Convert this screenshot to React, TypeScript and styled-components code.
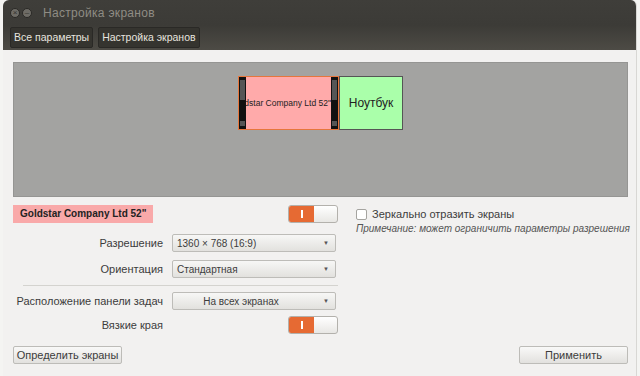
import React from "react";
import styled, { createGlobalStyle } from "styled-components";

const Global = createGlobalStyle`
  html, body {
    margin: 0;
    padding: 0;
    width: 640px;
    height: 376px;
    overflow: hidden;
    background: #f4f4f2;
    font-family: "Liberation Sans", Arial, sans-serif;
  }
`;

const Desktop = styled.div`
  width: 640px;
  height: 376px;
  padding-left: 3px;
  padding-right: 3px;
  box-sizing: border-box;
  display: flex;
`;

const Window = styled.div`
  flex: 1;
  display: flex;
  flex-direction: column;
  background: #f2f1f0;
  border-radius: 6px 6px 0 0;
  overflow: hidden;
  border-right: 1px solid #d8d7d4;
`;

const TitleBar = styled.div`
  height: 50px;
  background: linear-gradient(#3f3e3a 0%, #3c3b37 50%, #4d4b45 100%);
  display: flex;
  flex-direction: column;
  padding: 0 7px;
`;

const TitleRow = styled.div`
  height: 25px;
  display: flex;
  align-items: center;
  gap: 2px;
`;

const WinButton = styled.span`
  width: 8px;
  height: 8px;
  border-radius: 50%;
  background: #6e6c66;
  border: 1px solid #2a2926;
  display: flex;
  align-items: center;
  justify-content: center;
  color: #34332f;
  font-size: 8px;
  line-height: 1;
`;

const Title = styled.span`
  margin-left: 9px;
  color: #8f8c84;
  font-size: 12px;
  letter-spacing: 0.3px;
`;

const Crumbs = styled.div`
  display: flex;
  gap: 5px;
  padding-top: 2px;
`;

const Crumb = styled.span`
  background: #35342f;
  border: 1px solid #2a2926;
  border-radius: 2px;
  color: #e6e4df;
  font-size: 10.5px;
  padding: 1px 3px;
  height: 17px;
  line-height: 17px;
`;

const Body = styled.div`
  flex: 1;
  display: flex;
  flex-direction: column;
  padding: 12px 8px 10px 10px;
`;

const Canvas = styled.div`
  height: 135px;
  background: #a3a3a1;
  border: 1px solid #959593;
  display: flex;
  justify-content: center;
  align-items: flex-start;
  padding-top: 13px;
  box-sizing: border-box;
`;

const Monitor = styled.div<{ $bg: string; $border: string; $w: number }>`
  width: ${(p) => p.$w}px;
  height: 54px;
  background: ${(p) => p.$bg};
  border: 1px solid ${(p) => p.$border};
  display: flex;
  align-items: stretch;
  box-sizing: border-box;
`;

const Film = styled.div`
  width: 7px;
  background: #111;
  display: flex;
  flex-direction: column;
  justify-content: space-between;
  padding: 3px 1px;
  box-sizing: border-box;
`;

const Hole = styled.span`
  height: 5px;
  background: #555;
`;

const Gap = styled.span`
  flex: 1;
`;

const MonLabel = styled.div<{ $size: number; $end?: boolean }>`
  flex: 1;
  display: flex;
  align-items: center;
  justify-content: ${(p) => (p.$end ? "flex-end" : "center")};
  overflow: hidden;
  white-space: nowrap;
  font-size: ${(p) => p.$size}px;
  color: #222;
`;

const Controls = styled.div`
  display: flex;
  margin-top: 8px;
`;

const LeftCol = styled.div`
  width: 325px;
  flex-shrink: 0;
  display: flex;
  flex-direction: column;
`;

const RightCol = styled.div`
  flex: 1;
  padding-left: 18px;
  padding-top: 3px;
`;

const HeadRow = styled.div`
  display: flex;
  justify-content: space-between;
  align-items: center;
  height: 18px;
  margin-bottom: 11px;
`;

const NameTag = styled.span`
  background: #f9a9a9;
  font-weight: bold;
  font-size: 10px;
  color: #222;
  height: 18px;
  line-height: 18px;
  padding: 0 7px;
  white-space: nowrap;
`;

const Switch = styled.div`
  width: 48px;
  height: 16px;
  border: 1px solid #b3b1ac;
  border-radius: 3px;
  display: flex;
  overflow: hidden;
  background: linear-gradient(#ffffff, #e8e7e4);
`;

const SwitchOn = styled.span`
  width: 25px;
  background: #e66a33;
  display: flex;
  align-items: center;
  justify-content: center;
  &::after {
    content: "";
    width: 2px;
    height: 8px;
    background: #fff;
  }
`;

const FieldRow = styled.div<{ $after?: number }>`
  display: flex;
  align-items: center;
  height: 18px;
  margin-bottom: ${(p) => p.$after ?? 8}px;
`;

const Label = styled.span`
  width: 159px;
  text-align: right;
  padding-right: 9px;
  font-size: 11px;
  color: #3c3c3c;
  white-space: nowrap;
  box-sizing: border-box;
`;

const Combo = styled.div`
  flex: 1;
  height: 18px;
  margin-right: 2px;
  border: 1px solid #bdbcb8;
  border-radius: 2px;
  background: linear-gradient(#f7f7f6, #e2e1de);
  display: flex;
  align-items: center;
  font-size: 10px;
  color: #3c3c3c;
  box-sizing: border-box;
`;

const ComboText = styled.span<{ $center?: boolean }>`
  flex: 1;
  padding-left: 4px;
  white-space: nowrap;
  text-align: ${(p) => (p.$center ? "center" : "left")};
  padding-right: ${(p) => (p.$center ? "12px" : "0")};
`;

const Arrow = styled.span`
  width: 18px;
  text-align: center;
  font-size: 6px;
  color: #555;
`;

const Separator = styled.div`
  height: 1px;
  background: #d4d3cf;
  margin: -1px 0 6px 10px;
`;

const Check = styled.label`
  display: flex;
  align-items: center;
  gap: 5px;
  font-size: 11px;
  color: #3c3c3c;
`;

const Box = styled.span`
  width: 9px;
  height: 9px;
  border: 1px solid #a5a4a0;
  border-radius: 2px;
  background: #fff;
`;

const Note = styled.div`
  font-size: 10px;
  font-style: italic;
  color: #555;
  margin-top: 3px;
  white-space: nowrap;
`;

const Footer = styled.div`
  display: flex;
  justify-content: space-between;
  margin-top: auto;
  margin-bottom: 2px;
`;

const Button = styled.button`
  width: 109px;
  height: 18px;
  border: 1px solid #bdbcb8;
  border-radius: 2px;
  background: linear-gradient(#f9f9f8, #e2e1de);
  font-family: inherit;
  font-size: 11px;
  color: #3c3c3c;
  padding: 0;
  white-space: nowrap;
`;

const Strip = () => (
  <Film>
    <Hole />
    <Hole />
    <Hole />
    <Hole />
    <Gap />
    <Hole />
  </Film>
);

export default function App() {
  return (
    <>
      <Global />
      <Desktop>
        <Window>
          <TitleBar>
            <TitleRow>
              <WinButton>×</WinButton>
              <WinButton>–</WinButton>
              <Title>Настройка экранов</Title>
            </TitleRow>
            <Crumbs>
              <Crumb>Все параметры</Crumb>
              <Crumb>Настройка экранов</Crumb>
            </Crumbs>
          </TitleBar>
          <Body>
            <Canvas>
              <Monitor $bg="#ffaaaa" $border="#e6763c" $w={101}>
                <Strip />
                <MonLabel $size={8.5} $end>
                  Goldstar Company Ltd 52"
                </MonLabel>
                <Strip />
              </Monitor>
              <Monitor $bg="#aaffaa" $border="#555" $w={64}>
                <MonLabel $size={12}>Ноутбук</MonLabel>
              </Monitor>
            </Canvas>
            <Controls>
              <LeftCol>
                <HeadRow>
                  <NameTag>Goldstar Company Ltd 52"</NameTag>
                  <Switch>
                    <SwitchOn />
                  </Switch>
                </HeadRow>
                <FieldRow>
                  <Label>Разрешение</Label>
                  <Combo>
                    <ComboText>1360 × 768 (16:9)</ComboText>
                    <Arrow>▼</Arrow>
                  </Combo>
                </FieldRow>
                <FieldRow>
                  <Label>Ориентация</Label>
                  <Combo>
                    <ComboText>Стандартная</ComboText>
                    <Arrow>▼</Arrow>
                  </Combo>
                </FieldRow>
                <Separator />
                <FieldRow $after={6}>
                  <Label>Расположение панели задач</Label>
                  <Combo>
                    <ComboText $center>На всех экранах</ComboText>
                    <Arrow>▼</Arrow>
                  </Combo>
                </FieldRow>
                <FieldRow>
                  <Label>Вязкие края</Label>
                  <Gap />
                  <Switch>
                    <SwitchOn />
                  </Switch>
                </FieldRow>
              </LeftCol>
              <RightCol>
                <Check>
                  <Box />
                  Зеркально отразить экраны
                </Check>
                <Note>Примечание: может ограничить параметры разрешения</Note>
              </RightCol>
            </Controls>
            <Footer>
              <Button>Определить экраны</Button>
              <Button>Применить</Button>
            </Footer>
          </Body>
        </Window>
      </Desktop>
    </>
  );
}
